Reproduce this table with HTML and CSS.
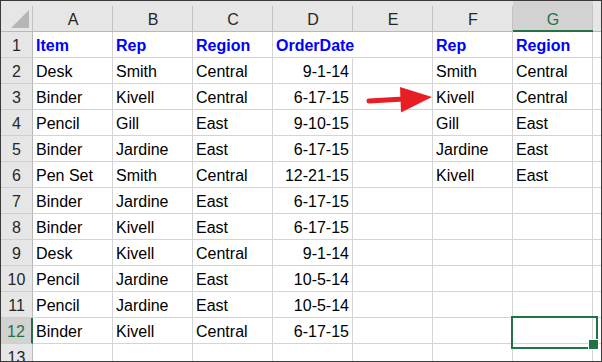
FILE: index.html
```html
<!DOCTYPE html>
<html lang="en">
<head>
<meta charset="utf-8">
<title>Sheet</title>
<link rel="stylesheet" href="styles.css">
</head>
<body>
<div class="sheet">
  <div class="corner"><svg width="31" height="30" viewBox="0 0 31 30"><polygon points="28,9 28,27 10,27" fill="#b5b5b5"/></svg></div>
  <div class="ch">A</div><div class="ch">B</div><div class="ch">C</div><div class="ch">D</div><div class="ch">E</div><div class="ch">F</div><div class="ch sel">G</div><div class="ch edge"></div>

  <div class="rh">1</div><div class="c h">Item</div><div class="c h">Rep</div><div class="c h">Region</div><div class="c h noline">OrderDate</div><div class="c"></div><div class="c h">Rep</div><div class="c h">Region</div><div class="c x"></div>
  <div class="rh">2</div><div class="c">Desk</div><div class="c">Smith</div><div class="c">Central</div><div class="c r">9-1-14</div><div class="c"></div><div class="c">Smith</div><div class="c">Central</div><div class="c x"></div>
  <div class="rh">3</div><div class="c">Binder</div><div class="c">Kivell</div><div class="c">Central</div><div class="c r">6-17-15</div><div class="c"></div><div class="c">Kivell</div><div class="c">Central</div><div class="c x"></div>
  <div class="rh">4</div><div class="c">Pencil</div><div class="c">Gill</div><div class="c">East</div><div class="c r">9-10-15</div><div class="c"></div><div class="c">Gill</div><div class="c">East</div><div class="c x"></div>
  <div class="rh">5</div><div class="c">Binder</div><div class="c">Jardine</div><div class="c">East</div><div class="c r">6-17-15</div><div class="c"></div><div class="c">Jardine</div><div class="c">East</div><div class="c x"></div>
  <div class="rh">6</div><div class="c">Pen Set</div><div class="c">Smith</div><div class="c">Central</div><div class="c r">12-21-15</div><div class="c"></div><div class="c">Kivell</div><div class="c">East</div><div class="c x"></div>
  <div class="rh">7</div><div class="c">Binder</div><div class="c">Jardine</div><div class="c">East</div><div class="c r">6-17-15</div><div class="c"></div><div class="c"></div><div class="c"></div><div class="c x"></div>
  <div class="rh">8</div><div class="c">Binder</div><div class="c">Kivell</div><div class="c">East</div><div class="c r">6-17-15</div><div class="c"></div><div class="c"></div><div class="c"></div><div class="c x"></div>
  <div class="rh">9</div><div class="c">Desk</div><div class="c">Kivell</div><div class="c">Central</div><div class="c r">9-1-14</div><div class="c"></div><div class="c"></div><div class="c"></div><div class="c x"></div>
  <div class="rh">10</div><div class="c">Pencil</div><div class="c">Jardine</div><div class="c">East</div><div class="c r">10-5-14</div><div class="c"></div><div class="c"></div><div class="c"></div><div class="c x"></div>
  <div class="rh">11</div><div class="c">Pencil</div><div class="c">Jardine</div><div class="c">East</div><div class="c r">10-5-14</div><div class="c"></div><div class="c"></div><div class="c"></div><div class="c x"></div>
  <div class="rh sel">12</div><div class="c">Binder</div><div class="c">Kivell</div><div class="c">Central</div><div class="c r">6-17-15</div><div class="c"></div><div class="c"></div><div class="c active"></div><div class="c x"></div>
  <div class="rh last">13</div><div class="c last"></div><div class="c last"></div><div class="c last"></div><div class="c last"></div><div class="c last"></div><div class="c last"></div><div class="c last"></div><div class="c x last"></div>

  <svg class="arrow" width="80" height="40" viewBox="0 0 80 40">
    <line x1="9" y1="21" x2="44" y2="19" stroke="#e81e25" stroke-width="5" stroke-linecap="round"/>
    <polygon points="40,7 72,17 41,32.5" fill="#e81e25"/>
  </svg>
</div>
</body>
</html>
```
FILE: styles.css
```css
* { box-sizing: border-box; }
html, body { margin: 0; padding: 0; background: #fff; }

.sheet {
  position: relative;
  display: grid;
  grid-template-columns: 32px repeat(7, 80px) 8px;
  grid-template-rows: 31px repeat(12, 26px) 17px;
  width: 602px;
  height: 362px;
  border: 1px solid #3a3a3a;
  background: #fff;
  font-family: "Liberation Sans", Arial, sans-serif;
  font-size: 16px;
  color: #000;
  overflow: hidden;
}

.corner {
  background: linear-gradient(#c2c2c2, #c2c2c2) right bottom / 1px 25px no-repeat, #e6e6e6;
  border-bottom: 1px solid #b9b9b9;
}
.corner svg { display: block; }

.ch {
  background: linear-gradient(#c2c2c2, #c2c2c2) right bottom / 1px 25px no-repeat, #e6e6e6;
  border-bottom: 1px solid #b9b9b9;
  text-align: center;
  padding-top: 8px;
  line-height: 22px;
  color: #262626;
}
.ch.sel {
  background: linear-gradient(#c2c2c2, #c2c2c2) right bottom / 1px 25px no-repeat, #d2d2d2;
  border-bottom: 2px solid #217346;
  color: #217346;
}
.ch.edge { background: #e6e6e6; }

.rh {
  background: #e6e6e6;
  border-right: 1px solid #b9b9b9;
  border-bottom: 1px solid #cfcfcf;
  text-align: center;
  padding-top: 2px;
  line-height: 24px;
  color: #262626;
  overflow: hidden;
}
.rh.sel {
  background: #d2d2d2;
  border-right: 2px solid #217346;
  color: #217346;
}
.rh.last { border-bottom: none; }

.c {
  border-right: 1px solid #d4d4d4;
  border-bottom: 1px solid #d4d4d4;
  padding: 2px 3px 0;
  line-height: 24px;
  white-space: nowrap;
}
.c.x { border-right: none; padding: 0; }
.c.last { border-bottom: none; }
.c.r { text-align: right; }
.c.h { font-weight: bold; color: #0000ff; }
.c.noline { border-right-color: transparent; }

.c.active { position: relative; z-index: 1; }
.c.active::before {
  content: "";
  position: absolute;
  left: -2px;
  top: -2px;
  width: 83px;
  height: 29px;
  border: 2px solid #217346;
}
.c.active::after {
  content: "";
  position: absolute;
  left: 75px;
  top: 21px;
  width: 9px;
  height: 9px;
  background: #217346;
  border: 1px solid #fff;
}

.arrow {
  position: absolute;
  left: 359px;
  top: 79px;
  z-index: 2;
}
```
